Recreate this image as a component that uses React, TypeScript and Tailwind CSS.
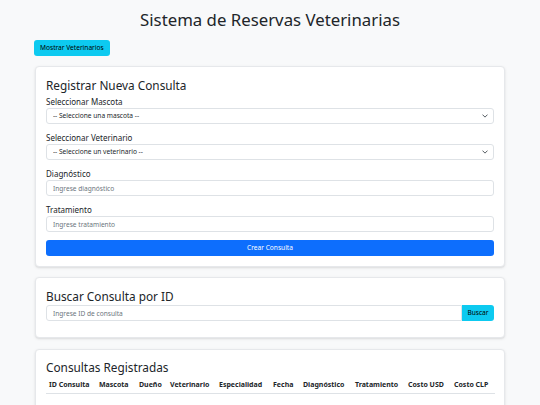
import React from 'react';

const font = { fontFamily: '"Noto Sans", "Open Sans", sans-serif' };

function Chevron() {
  return (
    <svg width="6" height="6" viewBox="0 0 16 16" className="pointer-events-none absolute right-[6px] top-1/2 -translate-y-1/2">
      <path d="m2 5 6 6 6-6" fill="none" stroke="#4b5258" strokeWidth="2.5" strokeLinecap="round" strokeLinejoin="round" />
    </svg>
  );
}

function Field({ label, children }: { label: string; children: React.ReactNode }) {
  return (
    <div className="mb-[8px]">
      <label className="block text-[8px] leading-[11px] mb-[1px] text-[#212529]">{label}</label>
      {children}
    </div>
  );
}

function SelectBox({ text }: { text: string }) {
  return (
    <div className="relative">
      <select className="block appearance-none w-full h-[16px] bg-white border border-[#dee2e6] rounded-[3px] pl-[6px] text-[6.6px] leading-[14px] text-[#212529] outline-none">
        <option>{text}</option>
      </select>
      <Chevron />
    </div>
  );
}

function TextBox({ placeholder }: { placeholder: string }) {
  return (
    <input
      placeholder={placeholder}
      className="block w-full h-[16px] bg-white border border-[#dee2e6] rounded-[3px] px-[6px] text-[6.6px] text-[#212529] placeholder:text-[#6c757d] outline-none"
    />
  );
}

const columns: [string, string][] = [
  ['ID Consulta', 'w-[50px]'],
  ['Mascota', 'w-[40px]'],
  ['Dueño', 'w-[31px]'],
  ['Veterinario', 'w-[49px]'],
  ['Especialidad', 'w-[54px]'],
  ['Fecha', 'w-[30px]'],
  ['Diagnóstico', 'w-[52px]'],
  ['Tratamiento', 'w-[53px]'],
  ['Costo USD', 'w-[46px]'],
  ['Costo CLP', 'w-[44px]'],
];

export default function App() {
  return (
    <div className="min-h-screen w-full bg-[#f8f9fa] text-[#212529] leading-normal" style={font}>
      <div className="w-[470px] mx-auto pt-[10px]">
        <h1 className="text-center text-[16.8px] leading-[20px] font-normal mb-[10px]">Sistema de Reservas Veterinarias</h1>

        <button className="block h-[16px] px-[6px] bg-[#0dcaf0] rounded-[3px] text-[6.6px] leading-[16px] text-black mb-[10px] -ml-px">
          Mostrar Veterinarios
        </button>

        {/* Registrar */}
        <div className="bg-white border border-[#e6e8eb] rounded-[4px] shadow-sm px-[10px] pt-[11px] pb-[10px] mb-[10px]">
          <h3 className="text-[11.8px] leading-[14px] font-normal mb-[4px]">Registrar Nueva Consulta</h3>
          <Field label="Seleccionar Mascota">
            <SelectBox text="-- Seleccione una mascota --" />
          </Field>
          <Field label="Seleccionar Veterinario">
            <SelectBox text="-- Seleccione un veterinario --" />
          </Field>
          <Field label="Diagnóstico">
            <TextBox placeholder="Ingrese diagnóstico" />
          </Field>
          <Field label="Tratamiento">
            <TextBox placeholder="Ingrese tratamiento" />
          </Field>
          <button className="block w-full h-[16px] bg-[#0d6efd] rounded-[3px] text-white text-[6.6px] leading-[16px]">Crear Consulta</button>
        </div>

        {/* Buscar */}
        <div className="bg-white border border-[#e6e8eb] rounded-[4px] shadow-sm px-[10px] pt-[11px] pb-[16px] mb-[11px]">
          <h3 className="text-[11.8px] leading-[14px] font-normal mb-[2px]">Buscar Consulta por ID</h3>
          <div className="flex h-[16px]">
            <input
              placeholder="Ingrese ID de consulta"
              className="block flex-1 min-w-0 h-[16px] bg-white border border-[#dee2e6] rounded-l-[3px] px-[6px] text-[6.6px] placeholder:text-[#6c757d] outline-none"
            />
            <button className="block w-[32px] h-[16px] bg-[#0dcaf0] rounded-r-[3px] text-[6.6px] leading-[16px] text-black">Buscar</button>
          </div>
        </div>

        {/* Consultas */}
        <div className="bg-white border border-[#e6e8eb] rounded-[4px] shadow-sm p-[10px] pb-[20px]">
          <h3 className="text-[11.8px] leading-[14px] font-normal mb-[3px]">Consultas Registradas</h3>
          <table className="w-full table-fixed border-collapse">
            <thead>
              <tr className="border-b border-[#dee2e6]">
                {columns.map(([c, w]) => (
                  <th key={c} className={`${w} text-left font-bold text-[7px] leading-[16px] pl-[3px] whitespace-nowrap`}>
                    {c}
                  </th>
                ))}
              </tr>
            </thead>
            <tbody />
          </table>
        </div>
      </div>
    </div>
  );
}
